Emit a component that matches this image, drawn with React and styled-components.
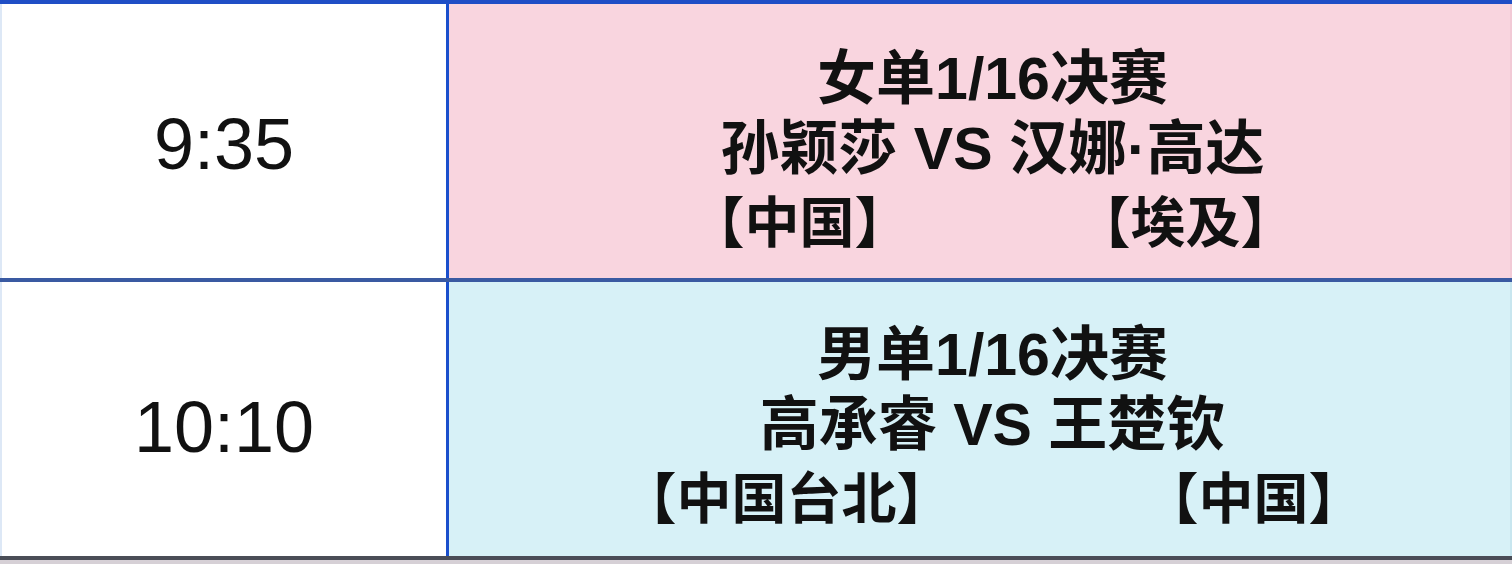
import React from "react";
import styled, { createGlobalStyle } from "styled-components";

const GlobalStyle = createGlobalStyle`
  html, body { margin: 0; padding: 0; background: #ffffff; }
  body { width: 1512px; height: 564px; overflow: hidden; }
`;

const Table = styled.div`
  display: flex;
  flex-direction: column;
  width: 1512px;
  border-top: 4px solid #1f4ec6;
  box-sizing: border-box;
`;

const Row = styled.div`
  display: grid;
  grid-template-columns: 449px 1fr;
  height: 278px;
  border-bottom: 4px solid ${(p) => p.$line};
  box-sizing: border-box;
`;

const TimeCell = styled.div`
  display: flex;
  align-items: center;
  justify-content: center;
  background: #ffffff;
  border-left: 2px solid #dde8f6;
  border-right: 3px solid #1a4fcc;
  padding-top: ${(p) => p.$shift}px;
  box-sizing: border-box;
  font-family: "Liberation Sans", Arial, sans-serif;
  font-size: 72px;
  color: #111111;
`;

const MatchCell = styled.div`
  display: flex;
  flex-direction: column;
  align-items: center;
  justify-content: center;
  padding-top: ${(p) => p.$pad}px;
  padding-left: 26px;
  background: ${(p) => p.$bg};
  border-right: 2px solid ${(p) => p.$edge};
  box-sizing: border-box;
  font-family: "Liberation Sans", "Noto Sans CJK SC", sans-serif;
  font-weight: 700;
  color: #111111;
`;

const Line = styled.div`
  white-space: pre;
  font-size: 59px;
  line-height: 70px;
`;

const Teams = styled.div`
  display: flex;
  gap: ${(p) => p.$gap}px;
  white-space: pre;
  font-family: "Noto Sans CJK SC", sans-serif;
  font-size: 55px;
  line-height: 68px;
`;

const Team = styled.span`
  display: block;
`;

const Footer = styled.div`
  height: 4px;
  background: #d6d0d6;
`;

const matches = [
  {
    time: "9:35",
    shift: 6,
    pad: 14,
    bg: "#f9d5df",
    edge: "#f2cad6",
    line: "#3a5aa2",
    title: "女单1/16决赛",
    players: "孙颖莎 VS 汉娜·高达",
    left: "【中国】",
    right: "【埃及】",
    gap: 166,
  },
  {
    time: "10:10",
    shift: 16,
    pad: 10,
    bg: "#d7f1f7",
    edge: "#c8e6ef",
    line: "#4a4d57",
    title: "男单1/16决赛",
    players: "高承睿 VS 王楚钦",
    left: "【中国台北】",
    right: "【中国】",
    gap: 192,
  },
];

export default function App() {
  return (
    <>
      <GlobalStyle />
      <Table>
        {matches.map((m) => (
          <Row key={m.time} $line={m.line}>
            <TimeCell $shift={m.shift}>{m.time}</TimeCell>
            <MatchCell $bg={m.bg} $edge={m.edge} $pad={m.pad}>
              <Line>{m.title}</Line>
              <Line>{m.players}</Line>
              <Teams $gap={m.gap}>
                <Team>{m.left}</Team>
                <Team>{m.right}</Team>
              </Teams>
            </MatchCell>
          </Row>
        ))}
        <Footer />
      </Table>
    </>
  );
}
